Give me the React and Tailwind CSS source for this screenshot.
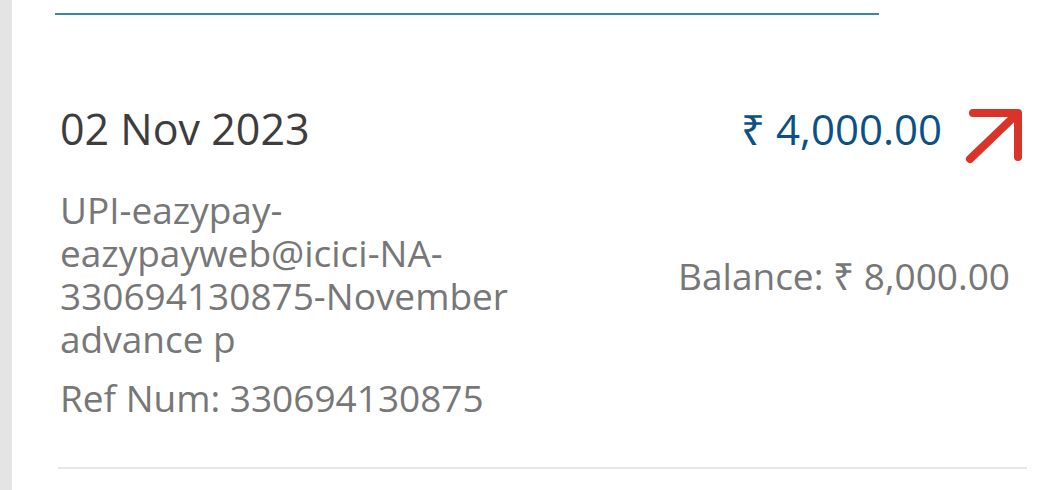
const txn = {
  date: '02 Nov 2023',
  amount: '₹ 4,000.00',
  balance: '₹ 8,000.00',
  description: 'UPI-eazypay-eazypayweb@icici-NA-330694130875-November advance p',
  ref: '330694130875'
};

function ArrowUpRight() {
  return (
    <svg width="60" height="58" viewBox="0 0 60 58" fill="none" className="mt-[0px] ml-[22px] shrink-0">
      <g stroke="#d9342a" strokeWidth="8" strokeLinecap="round" strokeLinejoin="round">
        <path d="M9 6H54V50" />
        <path d="M6 52L52 8" />
      </g>
    </svg>
  );
}

export default function App() {
  return (
    <div className="flex h-[490px] w-[1052px] overflow-hidden bg-white font-['Open_Sans','Noto_Sans',sans-serif]">
      <div className="w-[12px] shrink-0 bg-[#e4e4e4]" />

      <div className="flex-1">
        <div className="ml-[43px] mt-[13px] h-[2px] w-[824px] bg-[#3a86ab]" />

        <div className="mt-[92px] flex justify-between pl-[48px] pr-[28px]">
          <div className="w-[490px]">
            <p className="text-[43px] leading-[43px] text-[#3d3d3d]">{txn.date}</p>
            <p className="mt-[38px] text-[37px] leading-[43px] text-[#777777]">{txn.description}</p>
            <p className="mt-[16px] text-[37px] leading-[43px] text-[#777777]">Ref Num: {txn.ref}</p>
          </div>

          <div className="flex flex-col items-end">
            <div className="flex items-start">
              <span className="text-[42px] leading-[43px] text-[#0b5185]">{txn.amount}</span>
              <ArrowUpRight />
            </div>
            <p className="mr-[14px] mt-[89px] text-[37px] leading-[43px] text-[#777777]">Balance: {txn.balance}</p>
          </div>
        </div>

        <div className="ml-[46px] mt-[48px] h-[2px] w-[969px] bg-[#e6e6e6]" />
      </div>
    </div>
  );
}
